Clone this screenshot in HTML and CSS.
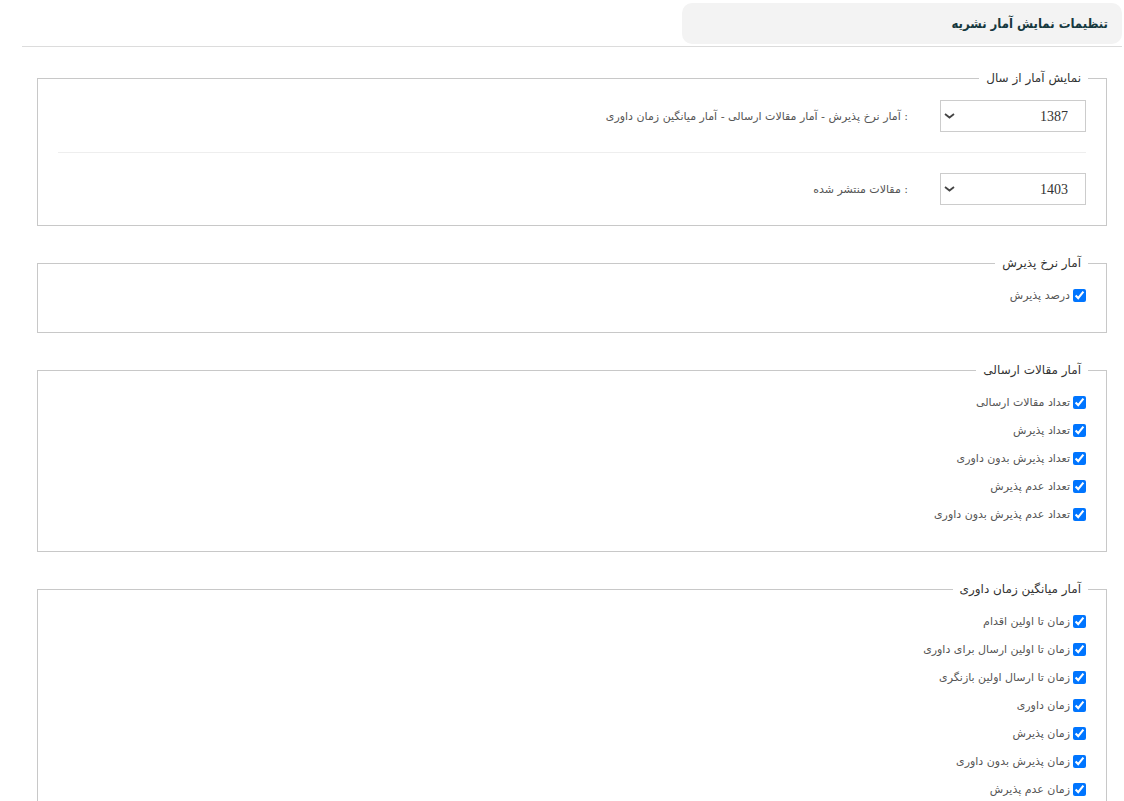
FILE: index.html
```html
<!DOCTYPE html>
<html lang="fa" dir="rtl">
<head>
<meta charset="utf-8">
<title>تنظیمات نمایش آمار نشریه</title>
<link rel="stylesheet" href="styles.css">
</head>
<body>
<div class="page">
  <div class="header">
    <div class="tab">تنظیمات نمایش آمار نشریه</div>
  </div>
  <div class="content">
    <fieldset class="box box-years">
      <legend>نمایش آمار از سال</legend>
      <div class="row">
        <div class="select-wrap">
          <select class="year"><option>1387</option></select>
          <svg class="chev" width="11" height="6" viewBox="0 0 11 6"><path d="M1 1 L5.5 4.5 L10 1" fill="none" stroke="#444" stroke-width="1.8"/></svg>
        </div>
        <span class="row-label">: آمار نرخ پذیرش - آمار مقالات ارسالی - آمار میانگین زمان داوری</span>
      </div>
      <div class="sep"></div>
      <div class="row">
        <div class="select-wrap">
          <select class="year"><option>1403</option></select>
          <svg class="chev" width="11" height="6" viewBox="0 0 11 6"><path d="M1 1 L5.5 4.5 L10 1" fill="none" stroke="#444" stroke-width="1.8"/></svg>
        </div>
        <span class="row-label">: مقالات منتشر شده</span>
      </div>
    </fieldset>

    <fieldset class="box box-checks">
      <legend>آمار نرخ پذیرش</legend>
      <label class="check"><input type="checkbox" checked><span>درصد پذیرش</span></label>
    </fieldset>

    <fieldset class="box box-checks">
      <legend>آمار مقالات ارسالی</legend>
      <label class="check"><input type="checkbox" checked><span>تعداد مقالات ارسالی</span></label>
      <label class="check"><input type="checkbox" checked><span>تعداد پذیرش</span></label>
      <label class="check"><input type="checkbox" checked><span>تعداد پذیرش بدون داوری</span></label>
      <label class="check"><input type="checkbox" checked><span>تعداد عدم پذیرش</span></label>
      <label class="check"><input type="checkbox" checked><span>تعداد عدم پذیرش بدون داوری</span></label>
    </fieldset>

    <fieldset class="box box-checks">
      <legend>آمار میانگین زمان داوری</legend>
      <label class="check"><input type="checkbox" checked><span>زمان تا اولین اقدام</span></label>
      <label class="check"><input type="checkbox" checked><span>زمان تا اولین ارسال برای داوری</span></label>
      <label class="check"><input type="checkbox" checked><span>زمان تا ارسال اولین بازنگری</span></label>
      <label class="check"><input type="checkbox" checked><span>زمان داوری</span></label>
      <label class="check"><input type="checkbox" checked><span>زمان پذیرش</span></label>
      <label class="check"><input type="checkbox" checked><span>زمان پذیرش بدون داوری</span></label>
      <label class="check"><input type="checkbox" checked><span>زمان عدم پذیرش</span></label>
    </fieldset>
  </div>
</div>
</body>
</html>
```

FILE: styles.css
```css
html, body {
  margin: 0;
  padding: 0;
  background: #fff;
}
body {
  direction: rtl;
  font-family: Tahoma, "DejaVu Sans", sans-serif;
  color: #333;
}
.page {
  margin: 0 2px 0 22px;
  padding-top: 3px;
}
.header {
  display: flex;
  border-bottom: 1px solid #dcdcdc;
  padding-bottom: 2px;
}
.tab {
  width: 440px;
  height: 41px;
  box-sizing: border-box;
  background: #f3f3f3;
  border-radius: 10px;
  padding-right: 14px;
  display: flex;
  align-items: center;
  font-family: "DejaVu Sans Condensed", "DejaVu Sans", sans-serif;
  font-size: 13px;
  font-weight: bold;
  color: #17393f;
}
.content {
  display: flex;
  flex-direction: column;
  gap: 28px;
  padding: 22px 15px 0 15px;
}
.box {
  margin: 0;
  border: 1px solid #c8c8c8;
  padding: 0 20px;
  min-width: 0;
}
.box legend {
  font-size: 12px;
  line-height: 18px;
  padding: 0 7px;
  margin-right: -2px;
  color: #333;
}
.box-years {
  padding-top: 13px;
  padding-bottom: 20px;
}
.row {
  display: flex;
  align-items: center;
  gap: 32px;
}
.select-wrap {
  position: relative;
  display: flex;
}
.year {
  -webkit-appearance: none;
  appearance: none;
  width: 146px;
  height: 32px;
  border: 1px solid #cccccc;
  border-radius: 0;
  background: #fff;
  font-family: "Liberation Serif", serif;
  font-size: 14px;
  color: #333;
  padding: 0 17px 0 20px;
  margin: 0;
}
.chev {
  position: absolute;
  left: 4px;
  top: 13px;
  pointer-events: none;
}
.row-label {
  font-size: 11px;
  color: #555;
}
.sep {
  border-top: 1px solid #eeeeee;
  margin: 20px 0;
}
.box-checks {
  padding-top: 9px;
  padding-bottom: 23px;
}
.check {
  display: flex;
  align-items: center;
  height: 28px;
  font-size: 11px;
  color: #555;
}
.check input {
  width: 13px;
  height: 13px;
  margin: 0 0 0 3px;
}
```
